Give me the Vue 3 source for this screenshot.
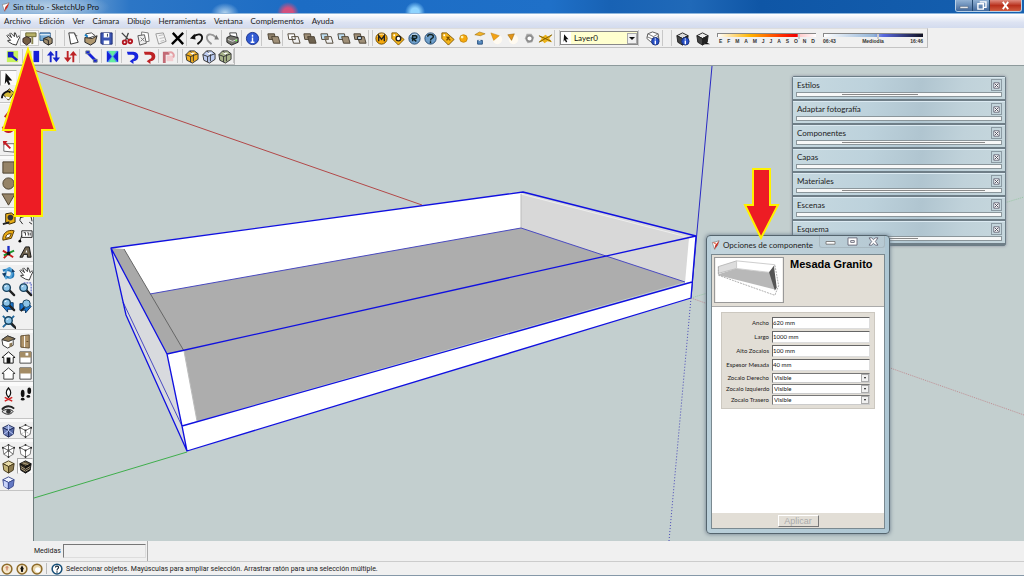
<script setup>
import { reactive, ref } from 'vue'

const sheet = '<path d="M3 2h6l4 10-8 2z" fill="#fff" stroke="#333"/><path d="M9 2l1 3 2 0" fill="none" stroke="#555"/>'
const coin = (c, e, inner) => `<circle cx="8" cy="8" r="6" fill="${c}" stroke="${e}"/><path d="M4 6a5 5 0 0 1 7-2" fill="none" stroke="#fff" opacity=".7"/>${inner}`
const tag = (inner) => `<path d="M2 2h5l8 7-6 6-7-7z" fill="#f5b51b" stroke="#805600"/><circle cx="4.500" cy="4.500" r="1" fill="#fff"/>${inner}`
const cube = (top, l, r, s) => `<path d="M8 2l6 3-6 3-6-3z" fill="${top}" stroke="${s}"/><path d="M2 5l6 3v7l-5-3z" fill="${l}" stroke="${s}"/><path d="M14 5l-6 3v7l5-3z" fill="${r}" stroke="${s}"/>`
const wire = (extra) => cube('#fff', '#fff', '#fff', '#777') + '<g fill="#222"><circle cx="2" cy="5" r="1"/><circle cx="14" cy="5" r="1"/><circle cx="8" cy="8" r="1"/><circle cx="8" cy="15" r="1"/><circle cx="8" cy="2" r="1"/></g>' + extra
const solid = (a, b) => `<path d="M2 3h7l1 6H3z" fill="${a}" stroke="#4d4334"/><path d="M6 6h7l2 7H8z" fill="${b}" stroke="#4d4334"/>`
const lens = (x, y) => `<path d="M${x + 3} ${y + 3}l5 5" stroke="#222" stroke-width="2.500" stroke-linecap="round"/><circle cx="${x}" cy="${y}" r="4" fill="#8cc4e8" stroke="#16405c" stroke-width="1.500"/><path d="M${x - 2} ${y - 1}l2-1" stroke="#fff"/>`
const info = '<circle cx="11" cy="11" r="4" fill="#2850c8" stroke="#16307c"/><path d="M11 8v1M11 10v4" stroke="#fff" stroke-width="1.500"/>'
const handShape = '<path d="M8 14L3 11l0-1 3 0-4-5 1-1 4 3-2-4 1-1 4 4 0-4 1 0 2 5 2-2 1 1-2 4-2 5z" fill="#fff" stroke="#333" stroke-linejoin="round"/>'
const curve = (c) => `<path d="M2 3h7c7 0 7 10 0 10l-1-2c3-1 3-5 0-5H3z" fill="${c}"/><path d="M9 10v6l-4-3z" fill="${c}"/>`
const bag = (c) => `<path d="M2 6l4-4 5 0 4 3v6l-6 4-6-3z" fill="${c}" stroke="#333"/><path d="M2 6l5 2v6M7 8l8-3M6 2l4 4v7" fill="none" stroke="#333"/><path d="M6 4l3 2 3-2" fill="#fff"/>`

const icons = {
  hand: handShape,
  options: '<path d="M4 2h11v4H4z" fill="#b7b067" stroke="#6c6735"/><path d="M11 6v8" stroke="#8a854f" stroke-width="2"/><path d="M1 8l4-2 4 2v4l-4 3-4-3z" fill="#745d43" stroke="#322"/>',
  component: '<path d="M1 2h11v8H1z" fill="#7aaed8" stroke="#2d5d8e"/><path d="M1 4h11" stroke="#fff"/><path d="M5 8l5-2 4 2v5l-4 2-5-3z" fill="#a29071" stroke="#222"/><path d="M5 8l5 2v5" fill="none" stroke="#222"/>',
  newdoc: sheet,
  open: '<path d="M3 3l6-1 4 3-8 3z" fill="#fff" stroke="#444"/><path d="M2 7l8 1 5-3-2 7-5 3-6-3z" fill="#b09870" stroke="#222"/><path d="M2 4l3 2" stroke="#1681c9" stroke-width="2"/>',
  save: '<path d="M2 2h12v12H3l-1-1z" fill="#3b55b4" stroke="#1b2a70"/><path d="M5 2h6v5H5zM5 10h6v4H5z" fill="#fff"/><path d="M9 3v3" stroke="#234"/>',
  cut: '<path d="M3 2l8 8M10 2L7 10" stroke="#444" stroke-width="1.500"/><circle cx="6" cy="12" r="2" fill="none" stroke="#b31822" stroke-width="2"/><circle cx="12" cy="11" r="2" fill="none" stroke="#b31822" stroke-width="2"/>',
  copy: '<path d="M6 1l7 1 1 9-8 1z" fill="#fff" stroke="#777"/><path d="M2 5l7-1 2 9-7 2z" fill="#eee" stroke="#555"/><path d="M5 7l4 4M9 7l-4 4" stroke="#777"/>',
  paste: '<path d="M3 3l8-1 3 9-8 3z" fill="#f4f4f4" stroke="#999"/><path d="M6 5l5-1M7 8l5-1M8 11l4-1" stroke="#bbb"/>',
  remove: '<path d="M3 2l11 12M14 2L2 14" stroke="#000" stroke-width="2.500"/>',
  undo: '<path d="M4 7C9 2 14 3 14 7c0 3-2 5-5 7" fill="none" stroke="#111" stroke-width="2"/><path d="M1 8l5-5 1 6z" fill="#111"/>',
  redo: '<path d="M12 7C7 2 2 3 2 7c0 3 2 5 5 7" fill="none" stroke="#999" stroke-width="2"/><path d="M15 9l-5 0 2-5z" fill="#777"/>',
  print: '<path d="M5 2h7l1 5H6z" fill="#fff" stroke="#444"/><path d="M2 7l4-2 8 2v5l-7 3-5-3z" fill="#77776f" stroke="#222"/><path d="M3 9l5 2 5-2" fill="none" stroke="#ddd"/><circle cx="12" cy="10" r="1" fill="#6e4"/>',
  info: '<circle cx="8" cy="8" r="6.500" fill="#315ad2" stroke="#17318c"/><path d="M8 4v2M8 7v5M6 12h4" stroke="#fff" stroke-width="1.500"/>',
  solid1: solid('#8e816c', '#a09078'), solid2: solid('#fff', 'none'), solid3: solid('#a09078', '#6e6250'),
  solid4: solid('#bfe0f4', 'none') + '<path d="M6 6h4v3H6z" fill="#8e816c"/>', solid5: solid('#bfe0f4', '#a09078'), solid6: solid('#a09078', '#a09078') + '<path d="M6 6h4v3H6z" fill="#cdeaff" stroke="#222"/>',
  coinM: coin('#f7a90b', '#6c4a00', '<path d="M5 11V5l3 4 3-4v6" fill="none" stroke="#222" stroke-width="1.500"/>'),
  coinR: coin('#6e9fcb', '#274d75', '<path d="M6 11V5h3a1.500 1.500 0 0 1 0 3H6l4 3" fill="none" stroke="#122" stroke-width="1.500"/>'),
  coinQ: coin('#6e9fcb', '#274d75', '<path d="M5 6c0-3 6-3 6 0 0 2-3 1-3 4M8 11v2" fill="none" stroke="#122" stroke-width="1.500"/>'),
  tagO: tag('<circle cx="9" cy="8" r="2.500" fill="#fff" stroke="#222" stroke-width="1.500"/>'),
  tagF: tag('<path d="M7 10l3-4M7 6l4 4" stroke="#744c00" stroke-width="1.500"/>'),
  ball: '<circle cx="8" cy="8" r="4" fill="#f6a90c" stroke="#c58a14"/><circle cx="6.500" cy="6.500" r="1.500" fill="#fff3b0"/>',
  lamp: '<path d="M3 4l5-3 6 2-5 2z" fill="#f3b326" stroke="#8a5c00" stroke-width=".5"/><path d="M6 10h5v4H6z" fill="#5b8ec1" stroke="#234e7e"/><path d="M7 10l2 0" stroke="#fff"/>',
  spotA: '<circle cx="9" cy="9" r="5" fill="#fffaf0"/><path d="M2 2l9 3-6 5z" fill="#f3a216" stroke="#b97b0b" stroke-width=".5"/>',
  spotB: '<circle cx="9" cy="9" r="5" fill="#fffaf0"/><path d="M3 4l7-1-3 7z" fill="#e2951a" stroke="#8a5c00" stroke-width=".5"/>',
  ring: '<path d="M5 3l5 0 3 4-2 5-5 1-3-5z" fill="#aaa"/><circle cx="8" cy="8" r="3" fill="#fff" stroke="#888" stroke-width="1.500"/>',
  flare: '<path d="M1 5l4 1 3-2 3 2 4-2-3 4 3 4-5-1-3 2-2-2-4 1 3-4z" fill="#edb31a"/><path d="M1 5l13 6M1 12L15 4" stroke="#7b5b00"/>',
  layer: '<path d="M3 3l5-2 6 2 1 7-6 4-7-6z" fill="#fff" stroke="#555"/><path d="M2 6l7 3 6-4M3 3l6 3 5-3M9 6v8" fill="none" stroke="#777"/>' + info,
  boxInfo: cube('#ddd', '#444', '#222', '#222') + info,
  box: cube('#eee', '#444', '#222', '#222') + '<path d="M12 12l4 2h-6z" fill="#111"/>',
  scaleBox: '<path d="M2 2h12v12H2z" fill="#c6f35c"/><path d="M3 3h6v6H3z" fill="#1118c8"/><path d="M7 7l6 5" stroke="#1118c8" stroke-width="2.500"/>',
  bar: '<path d="M8 2h6v12H8z" fill="#1520d8"/><path d="M2 2h4v12H2z" fill="#d9f07e"/>',
  arrowsBlue: '<path d="M5 14V5M11 2v9" stroke="#1725cc" stroke-width="2"/><path d="M1 7l4-5 4 5zM7 9h8l-4 5z" fill="#1725cc"/>',
  arrowsRed: '<path d="M5 2v9M11 14V5" stroke="#bd2326" stroke-width="2"/><path d="M1 9h8l-4 5zM7 7l4-5 4 5z" fill="#bd2326"/>',
  link: '<path d="M4 4l8 8" stroke="#1520d8" stroke-width="3"/><path d="M2 2h4v3H2zM10 11h4v3h-4z" fill="#1520d8" stroke="#678"/>',
  bow: '<path d="M2 2h12v12H2z" fill="#4c8cf0"/><path d="M2 2l5 6-5 6zM14 2L9 8l5 6z" fill="#1520d8"/><path d="M4 2h8L8 8zM4 14h8L8 8z" fill="#63ec9d"/>',
  curveBlue: curve('#1725dd'), curveRed: curve('#bd2326'),
  faded: '<path d="M2 3h7v3H5v9H2z" fill="#c36a75"/><path d="M6 7h7v6H6z" fill="#f3cccf"/><path d="M8 4c4-2 7 2 5 5" fill="none" stroke="#e4a0a5" stroke-width="2"/>',
  bagGold: bag('#efae22'), bagBlue: bag('#bdcdf3'), bagGreen: bag('#a7b388'),
  select: '<path d="M5 2l7 8-4 0 2 4-2 1-2-4-2 3z" fill="#111"/>',
  paint: '<path d="M2 8l7-6 5 4-6 8z" fill="#d3ba36" stroke="#222"/><path d="M1 12c0-6 7-9 9-6" fill="none" stroke="#111" stroke-width="2"/><path d="M5 11l4 1" stroke="#fff" stroke-width="2"/>',
  pencil: '<path d="M4 13l7-9" stroke="#bd2326" stroke-width="2"/>',
  arc: '<path d="M2 5c2 7 9 7 12 1" fill="none" stroke="#c41d24" stroke-width="2.500"/>',
  resize: '<path d="M3 5h11v9l-11-1z" fill="#fff" stroke="#666"/><path d="M3 3l7 7" stroke="#c41d24" stroke-width="2"/><path d="M2 2h5L3 7z" fill="#c41d24"/>',
  rect: '<path d="M2 2h12v12H2z" fill="#958367" stroke="#4a3f2d"/>',
  circle: '<circle cx="8" cy="8" r="6" fill="#958367" stroke="#4a3f2d"/>',
  poly: '<path d="M1 2h14L8 14z" fill="#958367" stroke="#4a3f2d"/>',
  tape: '<path d="M5 3l6-1 4 3v7l-6 2-4-2z" fill="#e9ae16" stroke="#332500"/><circle cx="10" cy="7" r="3" fill="#333"/><path d="M9 12l-7 2" stroke="#222" stroke-width="2"/>',
  dim: '<path d="M3 7l10-3M3 5l-1 5M13 2l2 9M2 10l3 4M12 12l3 2" fill="none" stroke="#222"/>',
  protractor: '<path d="M2 13C1 6 7 1 14 3l-3 8z" fill="#e9a912" stroke="#523600"/><path d="M5 11c0-4 3-5 6-5l-2 4z" fill="#fff" stroke="#523600"/>',
  label: '<path d="M4 3h11v7H4zM4 8l-2 6" fill="#fff" stroke="#222"/><path d="M6 5h2v3M10 5h1v3M13 5v3" stroke="#333" fill="none"/><circle cx="2" cy="14" r="1.500"/>',
  axes: '<path d="M8 1v8" stroke="#1b2cc4" stroke-width="2.500"/><path d="M8 9l-5 5M2 6l11 7" stroke="#c81d1d" stroke-width="2"/><path d="M3 11l11-5" stroke="#18962c" stroke-width="2"/><circle cx="8" cy="9" r="2" fill="#111"/>',
  text3d: '<path d="M2 13L8 2h4l2 11h-4v-3H6l-1 3z" fill="#70644e" stroke="#111"/><path d="M8 8l1-3 1 3z" fill="#fff"/>',
  orbit: '<path d="M2 5c5-2 11 0 11 4s-5 4-9 2" fill="none" stroke="#2478b7" stroke-width="2.500"/><path d="M6 14c-3-4-1-11 3-12 3 1 4 8 0 11" fill="none" stroke="#56a5d9" stroke-width="2"/><path d="M1 8l5-1-2 5zM12 3l3 3-4 1z" fill="#123e68"/>',
  pan: handShape,
  zoom: lens(6, 6),
  zoomWin: '<path d="M6 1h8v13" fill="none" stroke="#3549bf" stroke-dasharray="2 1"/>' + lens(6, 6),
  prev: '<path d="M1 8l6-6v3h6v7H7v3z" fill="#1c77d1" stroke="#0c3762"/>' + lens(6, 5),
  next: '<path d="M14 9L8 3v3H2v7h6v3z" fill="#1c77d1" stroke="#0c3762"/><path d="M7 10l-4 4" stroke="#222" stroke-width="2"/><circle cx="9" cy="6" r="4" fill="#8cc4e8" stroke="#16405c"/>',
  extents: '<path d="M2 2l12 12M14 2L2 14" stroke="#22689c" stroke-width="2"/>' + lens(8, 7),
  iso: '<path d="M1 6l6-4 8 3-2 2v5l-6 3-5-3z" fill="#fff" stroke="#333"/><path d="M1 6l7 2 7-3-8-3z" fill="#8d7956" stroke="#333"/><path d="M9 10l3-1v4l-3 1z" fill="#8d7956"/>',
  door: '<path d="M3 2l9-1v14l-9-1z" fill="#ae9268" stroke="#5f4b2d"/><path d="M7 2v12" stroke="#fff"/><path d="M9 8h2" stroke="#5f4b2d"/>',
  house: '<path d="M1 8l7-6 7 6-2 0v6H3V8z" fill="#fff" stroke="#111"/><path d="M6 8h4v6H6z" fill="#111"/>',
  houseBack: '<path d="M1 8l7-6 7 6-2 0v6H3V8z" fill="#fff" stroke="#333"/>',
  sideA: '<path d="M2 2h12v12H2z" fill="#fff" stroke="#444"/><path d="M2 2h12v6H2z" fill="#a48c65"/><path d="M8 3h3v3H8z" fill="#fff"/>',
  sideB: '<path d="M2 2h12v12H2z" fill="#fff" stroke="#444"/><path d="M2 2h12v6H2z" fill="#a48c65"/>',
  person: '<path d="M8 1c-3 3-3 7 0 10 3-3 3-7 0-10z" fill="#fff" stroke="#111" stroke-width="1.500"/><path d="M4 11l8 4M12 11l-8 4" stroke="#d02020" stroke-width="1.500"/>',
  feet: '<g fill="#111"><ellipse cx="5" cy="7" rx="2" ry="4"/><ellipse cx="5" cy="13" rx="2" ry="1.500"/><ellipse cx="12" cy="4" rx="2" ry="3.500"/><ellipse cx="11" cy="10" rx="2" ry="1.500"/></g>',
  eye: '<path d="M1 7c4-5 10-4 13-1" fill="none" stroke="#222" stroke-width="2"/><path d="M1 9c4-3 9-3 12 0-3 4-8 4-12 0z" fill="#ddd" stroke="#222"/><circle cx="8" cy="9" r="2.500" fill="#333"/>',
  xray: cube('#8ea1d4', '#6c7db8', '#566aa8', '#222d5c') + '<path d="M3 12l5-4 5 4M8 2v6" fill="none" stroke="#c8d3ff"/>',
  backEdges: wire('<path d="M3 12l5-3 5 3" fill="none" stroke="#999" stroke-dasharray="1 1"/>'),
  wireframe: wire('<path d="M3 12l5-4 5 4M8 2v6" fill="none" stroke="#555"/>'),
  hidden: wire(''),
  shaded: cube('#e8dcaa', '#c5b579', '#8b7a4f', '#45391b'),
  textured: cube('#60553b', '#332c20', '#15120e', '#111') + '<path d="M3 8l5 3 5-3M3 10l5 3 5-3M5 4l6 2" fill="none" stroke="#b8a98a"/>',
  mono: cube('#edf2ff', '#8294dc', '#6479c4', '#3c4c8e') + '<path d="M3 6l4 2v6l-4-2z" fill="#c9d4fa"/>'
}

const seg = (w, names, after = 2, grip = false) => ({ w, names: names.split(' '), after, grip })
const rowOne = [
  seg(51, 'hand options component', 10, true),
  seg(50, 'newdoc open save', 3),
  seg(68, 'cut copy paste remove', 2),
  seg(33, 'undo redo', 2),
  seg(18, 'print', 2),
  seg(18, 'info', 4),
  seg(17, 'solid1', 3),
  seg(83, 'solid2 solid3 solid4 solid5 solid6', 5, true),
  seg(181, 'coinM tagO coinR coinQ tagF ball lamp spotA spotB ring flare', 6, true)
]
const rowTwo = [
  seg(20, 'scaleBox'), seg(18, 'bar', 3), seg(34, 'arrowsBlue arrowsRed'), seg(20, 'link'),
  seg(18, 'bow', 3), seg(34, 'curveBlue curveRed'), seg(17, 'faded', 6, true), seg(50, 'bagGold bagBlue bagGreen', 1)
]
const side = [
  { h: 32, after: 2, names: ['select', '', 'paint', ''] },
  { h: 51, after: 4, names: ['pencil', '', 'arc', '', 'resize', ''] },
  { h: 48, after: 3, names: ['rect', '', 'circle', '', 'poly', ''] },
  { h: 51, after: 4, names: ['tape', 'dim', 'protractor', 'label', 'axes', 'text3d'] },
  { h: 64, after: 4, names: ['orbit', 'pan', 'zoom', 'zoomWin', 'prev', 'next', 'extents', ''] },
  { h: 48, after: 5, names: ['iso', 'door', 'house', 'sideA', 'houseBack', 'sideB'] },
  { h: 32, after: 4, names: ['person', 'feet', 'eye', ''] },
  { h: 16, after: 4, names: ['xray', 'backEdges'] },
  { h: 48, after: 1, names: ['wireframe', 'hidden', 'shaded', 'textured', 'mono', ''] }
]
const menus = ['Archivo', 'Edición', 'Ver', 'Cámara', 'Dibujo', 'Herramientas', 'Ventana', 'Complementos', 'Ayuda']
const months = ['E', 'F', 'M', 'A', 'M', 'J', 'J', 'A', 'S', 'O', 'N', 'D']
const trays = [
  { name: 'Estilos', tabs: 48 }, { name: 'Adaptar fotografía', tabs: 0 }, { name: 'Componentes', tabs: 90 },
  { name: 'Capas', tabs: 0 }, { name: 'Materiales', tabs: 90 }, { name: 'Escenas', tabs: 0 }, { name: 'Esquema', tabs: 48 }
]
const fields = reactive([
  { id: 'ancho', label: 'Ancho', value: '620 mm' },
  { id: 'largo', label: 'Largo', value: '1000 mm' },
  { id: 'alto', label: 'Alto Zocalos', value: '100 mm' },
  { id: 'espesor', label: 'Espesor Mesada', value: '40 mm' }
])
const choices = reactive([
  { id: 'derecho', label: 'Zocalo Derecho', value: 'Visible' },
  { id: 'izquierdo', label: 'Zocalo Izquierdo', value: 'Visible' },
  { id: 'trasero', label: 'Zocalo Trasero', value: 'Visible' }
])
const layer = ref('Layer0')
const measure = ref('')
</script>

<template>
  <div class="app">
    <header class="titlebar">
      <svg class="logo" viewBox="0 0 16 16"><path d="M2 4l5-1 6-2-2 6-5 8-2-5z" fill="#fff" stroke="#777" /><path d="M13 1l-3 8-5 6 2-7z" fill="#c52a1d" /></svg>
      <span class="caption">Sin título - SketchUp Pro</span>
      <div class="winbuttons">
        <button aria-label="Minimizar"><svg viewBox="0 0 14 10"><path d="M2 6h9v2H2z" fill="#fff" stroke="#456" stroke-width=".5" /></svg></button>
        <button aria-label="Restaurar"><svg viewBox="0 0 14 10"><path d="M5 1h7v6H9M3 3h6v6H3z" fill="none" stroke="#fff" stroke-width="1.500" /></svg></button>
        <button class="close" aria-label="Cerrar"><svg viewBox="0 0 14 10"><path d="M4 1l6 8M10 1L4 9" stroke="#fff" stroke-width="2" /></svg></button>
      </div>
    </header>

    <nav class="menubar"><a v-for="m in menus" :key="m" href="#">{{ m }}</a></nav>

    <div class="toolbars">
      <div class="row first">
        <template v-for="(s, i) in rowOne" :key="i">
          <div class="seg" :style="{ width: s.w + 'px' }">
            <button v-for="n in s.names" :key="n" :aria-label="n" :class="{ on: n === 'options' }"><svg viewBox="0 0 16 16" v-html="icons[n]"></svg></button>
          </div>
          <i class="div" :class="{ grip: s.grip }" :style="{ width: s.after + 'px' }"></i>
        </template>
        <div class="layerbox">
          <svg viewBox="0 0 16 16" v-html="icons.select"></svg>
          <select v-model="layer" aria-label="Capa"><option>Layer0</option></select>
          <i class="drop"></i>
        </div>
        <i class="div layergap"></i>
        <div class="seg single"><button aria-label="Capas"><svg viewBox="0 0 16 16" v-html="icons.layer"></svg></button></div>
        <i class="div grip wide"></i>
        <div class="seg double">
          <button aria-label="Sombras"><svg viewBox="0 0 16 16" v-html="icons.boxInfo"></svg></button>
          <button aria-label="Mostrar sombras"><svg viewBox="0 0 16 16" v-html="icons.box"></svg></button>
        </div>
        <div class="scale">
          <div class="ramp warm"><i></i></div>
          <div class="ticks"><span v-for="(m, i) in months" :key="i">{{ m }}</span></div>
        </div>
        <div class="scale hours">
          <div class="ramp cool"><i></i></div>
          <div class="ticks"><span>06:43</span><span>Mediodía</span><span>16:46</span></div>
        </div>
      </div>
      <div class="row second">
        <template v-for="(s, i) in rowTwo" :key="i">
          <div class="seg" :style="{ width: s.w + 'px' }">
            <button v-for="n in s.names" :key="n" :aria-label="n"><svg viewBox="0 0 16 16" v-html="icons[n]"></svg></button>
          </div>
          <i class="div" :class="{ grip: s.grip }" :style="{ width: s.after + 'px' }"></i>
        </template>
      </div>
    </div>

    <main class="work">
      <aside class="side">
        <template v-for="(s, i) in side" :key="i">
          <div class="pair" :style="{ height: s.h + 'px' }">
            <template v-for="(n, k) in s.names" :key="k">
              <button v-if="n" :aria-label="n" :class="{ sunk: n === 'textured' || n === 'select' }"><svg viewBox="0 0 16 16" v-html="icons[n]"></svg></button>
              <i v-else></i>
            </template>
          </div>
          <i class="rule" :style="{ height: s.after + 'px' }"></i>
        </template>
      </aside>

      <section class="canvas">
        <svg class="scene" viewBox="34 66 990 475" preserveAspectRatio="xMinYMin slice">
          <g fill="none">
            <path d="M34 70L422 205" stroke="#b24848" />
            <path d="M34 498L187 452" stroke="#3fae4c" />
            <path d="M712 66L691 298" stroke="#2a2ac4" />
            <path d="M691 298L669 541" stroke="#4848b8" stroke-dasharray="1 2" />
            <path d="M691 298L1024 415" stroke="#c08f94" stroke-dasharray="1 1" />
            <path d="M691 298L1024 197" stroke="#98c8a4" stroke-dasharray="1 1" />
          </g>
          <path d="M111 248L167 354 187 451 126 315z" fill="#d8dade" />
          <path d="M111 248L523 192 521 228 150 294z" fill="#fff" />
          <path d="M521 193L696 236 685 283 521 228z" fill="#d8d8d8" />
          <path d="M150 294L521 228 685 282 197 421 184 351z" fill="#adadad" />
          <path d="M111 248L124 249 184 351 167 354z" fill="#a9a9a9" />
          <path d="M167 354L184 351 197 421 182 426z" fill="#fff" />
          <path d="M689 238L696 236 692 282 685 283z" fill="#fff" />
          <path d="M182 426L692 282 691 298 187 451z" fill="#fff" />
          <path d="M521 194L687 237" stroke="#eee" fill="none" />
          <path d="M124 249L184 351" stroke="#666" fill="none" />
          <path d="M184 351L197 421M521 194v34" stroke="#bbb" fill="none" />
          <path d="M150 294L521 228 685 282M123 302L182 426" stroke="#4a4ac0" fill="none" />
          <path d="M111 248L523 192 696 236 167 354zM111 248L126 315 187 451 691 298 696 236M167 354L182 426 187 451M182 426L692 282" fill="none" stroke="#1010e0" stroke-width="1.300" stroke-linejoin="round" />
        </svg>

        <div class="trays">
          <div v-for="t in trays" :key="t.name" class="tray">
            <div class="trayhead"><span>{{ t.name }}</span><button :aria-label="'Cerrar ' + t.name"><svg viewBox="0 0 10 10"><path d="M2 2h6v6H2z" fill="#fff" stroke="#667" /><path d="M3 3l4 4M7 3L3 7" fill="none" stroke="#445" /></svg></button></div>
            <div class="strip"><i v-if="t.tabs" :style="{ width: t.tabs + '%' }"></i></div>
          </div>
        </div>

        <section class="dialog">
          <div class="dialoghead">
            <svg class="logo" viewBox="0 0 16 16"><path d="M2 4l5-1 6-2-2 6-5 8-2-5z" fill="#fff" stroke="#777" /><path d="M13 1l-3 8-5 6 2-7z" fill="#c52a1d" /><path d="M2 4l5 0 1 3z" fill="#e25b3c" /></svg>
            <span>Opciones de componente</span>
            <div class="dlgbuttons">
              <button aria-label="Minimizar"><svg viewBox="0 0 12 10"><path d="M1 5h10v3H1z" fill="#fff" stroke="#777" /></svg></button>
              <button aria-label="Maximizar"><svg viewBox="0 0 12 10"><path d="M1 1h10v8H1zM4 4h4v2H4z" fill="#fff" stroke="#667" /></svg></button>
              <button aria-label="Cerrar"><svg viewBox="0 0 12 10"><path d="M1 1h3l2 2 2-2h3L8 5l3 4H8L6 7 4 9H1l3-4z" fill="#fff" stroke="#667" /></svg></button>
            </div>
          </div>
          <div class="body">
            <div class="summary">
              <svg class="thumb" viewBox="0 0 70 46">
                <path d="M0 0h70v46H0z" fill="#fff" />
                <path d="M3 17L22 11 57 15 62 33 3 18z" fill="#b8b8b8" />
                <path d="M3 9L22 3 22 11 3 16z" fill="#ddd" stroke="#bbb" />
                <path d="M22 3L62 7 61 10 56 15 22 11z" fill="#fff" stroke="#ccc" />
                <path d="M61 8L64 31 62 34 56 15z" fill="#555" />
                <path d="M3 9v9L62 39 66 29 62 7" fill="none" stroke="#aaa" stroke-dasharray="2 1" />
              </svg>
              <h1>Mesada Granito</h1>
            </div>
            <form class="form" @submit.prevent>
              <div v-for="f in fields" :key="f.id" class="line tall">
                <label :for="f.id">{{ f.label }}</label><input :id="f.id" v-model="f.value" type="text" />
              </div>
              <div v-for="c in choices" :key="c.id" class="line">
                <label :for="c.id">{{ c.label }}</label>
                <div class="pick"><select :id="c.id" v-model="c.value"><option>Visible</option></select><i class="drop"></i></div>
              </div>
            </form>
            <footer><button disabled>Aplicar</button></footer>
          </div>
        </section>

        <svg class="pointer small" viewBox="0 0 38 76"><path d="M11 3h17v36h8L19 72 3 39h8z" fill="#ed1c24" stroke="#fff200" stroke-width="2" /></svg>
      </section>
    </main>

    <div class="measure"><label for="med">Medidas</label><input id="med" v-model="measure" type="text" /></div>
    <footer class="status">
      <svg viewBox="0 0 16 16"><circle cx="8" cy="8" r="6.500" fill="#f5e7c9" stroke="#8e6b2a" stroke-width="2" /><path d="M8 4v6M6 6h4" stroke="#d59175" stroke-width="2" /></svg>
      <svg viewBox="0 0 16 16"><circle cx="8" cy="8" r="6.500" fill="#f5e7c9" stroke="#8e6b2a" stroke-width="2" /><path d="M8 3l2 4-1 5H7L6 7z" fill="#111" /></svg>
      <svg viewBox="0 0 16 16"><circle cx="8" cy="8" r="6.500" fill="#e9d7ab" stroke="#8e6b2a" stroke-width="2" /><circle cx="9" cy="9" r="3.500" fill="#fff" /></svg>
      <i></i>
      <svg viewBox="0 0 16 16"><circle cx="8" cy="8" r="6.500" fill="#fff" stroke="#174f78" stroke-width="2" /><path d="M6 6c0-3 5-2 4 0 0 2-2 1-2 4M8 11v2" fill="none" stroke="#123" stroke-width="1.500" /></svg>
      <span>Seleccionar objetos. Mayúsculas para ampliar selección. Arrastrar ratón para una selección múltiple.</span>
    </footer>

    <svg class="pointer big" viewBox="0 0 58 174"><path d="M28 5L55 86H42V172H15V86H3z" fill="#ed1c24" stroke="#fff200" stroke-width="2" /></svg>
  </div>
</template>

<style>
body { margin: 0; }
</style>

<style scoped>
.app { position: relative; display: flex; flex-direction: column; min-height: 100vh; background: #f0f0f0; font-family: Lato, "Open Sans", sans-serif; font-size: 8px; line-height: 12px; color: #222; overflow: hidden; }
* { box-sizing: border-box; }
button { padding: 0; border: 0; background: none; font: inherit; color: inherit; display: flex; align-items: center; justify-content: center; }
input, select { font: inherit; color: #111; margin: 0; padding: 0; border-radius: 0; min-width: 0; }
select { appearance: none; border: 0; }
a { color: inherit; text-decoration: none; }

.titlebar { height: 14px; display: flex; align-items: center; gap: 2px; padding-left: 1px; border-bottom: 1px solid #8fb6dc;
  background: radial-gradient(ellipse 60px 14px at 50px 7px, #b6cfe6, transparent),
    radial-gradient(circle at 288px 13px, #d2507e 0 5px, transparent 11px),
    radial-gradient(circle at 415px 12px, #8fd4ff 0 4px, transparent 10px),
    radial-gradient(ellipse 14px 10px at 225px 13px, #b3d3ee, transparent),
    linear-gradient(90deg, #8db2d8 0, #5c95cf 90px, #2c76c6 130px, #1c6cc4 300px, #1f70c8 550px, #1862b4 610px, #2069b8 690px, #0f56a6 760px, #1560b0 100%); }
.logo { width: 10px; height: 10px; flex: none; }
.caption { flex: 1; color: #111; }
.winbuttons { display: flex; align-self: flex-start; height: 12px; margin-right: 2px; border: 1px solid #b8d0e6; border-top: 0; border-radius: 0 0 3px 3px; overflow: hidden; }
.winbuttons button { width: 17px; background: linear-gradient(#92b2d4, #42699c); border-right: 1px solid #24486e; }
.winbuttons .close { width: 31px; border: 0; background: linear-gradient(#e08c80, #b8301c 50%, #d05c40); }
.winbuttons svg { width: 13px; height: 9px; }

.menubar { height: 14px; display: flex; align-items: center; gap: 8px; padding-left: 4px; background: linear-gradient(#fff, #dde3f2 60%, #d3dbee); }
.toolbars { height: 38px; border-bottom: 1px solid #8d9a9c; background: #f0f0f0; }
.row { display: flex; align-items: stretch; width: max-content; border-right: 1px solid #bbb; border-bottom: 1px solid #c4c4c4; }
.first { height: 20px; padding-left: 4px; padding-right: 4px; border-top: 1px solid #ddd; }
.second { height: 17px; padding-left: 2px; }
.seg { display: flex; align-items: center; }
.seg button { flex: 1; height: 16px; min-width: 0; }
.seg svg, .pair svg { width: 15px; height: 15px; flex: none; }
.seg .on { background: #fafafa; border: 1px solid #ccc; }
.single { width: 20px; }
.double { width: 40px; }
.div { flex: none; border-left: 1px solid #c8c8c8; margin: 1px 0; }
.grip { border-right: 1px solid #c8c8c8; }
.wide { width: 10px; }
.layergap { width: 4px; }
.layerbox { display: flex; align-items: center; width: 78px; height: 14px; align-self: center; background: #ffffcf; border: 1px solid #888; }
.layerbox svg { width: 10px; height: 12px; background: #fff; flex: none; }
.layerbox select { flex: 1; height: 12px; padding-left: 3px; background: #ffffcf; }
.drop { display: flex; align-items: center; justify-content: center; width: 10px; height: 11px; flex: none; background: #f0f0f0; border: 1px solid #aaa; pointer-events: none; }
.drop::after { content: ""; border: 3px solid transparent; border-top: 3px solid #111; border-bottom: 0; }
.scale { width: 99px; margin: 4px 0 0 5px; }
.hours { width: 100px; margin-left: 7px; }
.ramp { height: 4px; display: flex; border-top: 1px solid #888; border-left: 1px solid #888; }
.ramp i { width: 2px; height: 5px; background: #fff; border: 1px solid #ccc; }
.warm { background: linear-gradient(90deg, #fff, #ffb400 33%, #ff2a00 66%, #e00 80%, #fcc 84%, #fff); }
.warm i { margin-left: 82%; }
.cool { background: linear-gradient(90deg, #fff, #93b4d8 50%, #5868e0 60%, #101020); }
.cool i { margin-left: 54%; }
.ticks { display: flex; justify-content: space-between; font: bold 5px/8px "Liberation Sans", sans-serif; padding: 0 1px 0 2px; color: #333; }
.hours .ticks { padding: 0; }

.work { flex: 1; display: flex; min-height: 475px; }
.side { width: 34px; flex: none; padding-top: 4px; background: #f0f0f0; border-right: 1px solid #6d7a7c; }
.pair { display: grid; grid-template-columns: 17px 16px; grid-auto-rows: 1fr; }
.pair button { min-height: 0; }
.pair .sunk { background: #fbfbfb; border: 1px solid; border-color: #aaa #eee #eee #aaa; }
.rule { display: block; border-top: 1px solid #c4c4c4; background: #fafafa; }
.canvas { position: relative; flex: 1; background: #c3cfcf; min-width: 0; overflow: hidden; }
.scene { position: absolute; inset: 0; width: 100%; height: 100%; }

.trays { position: absolute; top: 10px; right: 18px; width: 214px; border: 1px solid #6c7d86; border-radius: 2px; box-shadow: 0 0 3px #889; }
.tray { height: 24px; padding: 1px 3px 0; border-bottom: 2px solid #6f7e87; background: linear-gradient(100deg, #c7d9e0, #bdd2dc 35%, #b0c5d0 60%, #c0d2da 80%, #c6d7dd); border-top: 1px solid #dceaf2; }
.trayhead { display: flex; justify-content: space-between; align-items: center; height: 12px; padding-left: 1px; }
.trayhead button { width: 11px; height: 12px; border: 1px solid #8b9aa3; }
.trayhead svg { width: 9px; height: 9px; }
.strip { height: 5px; margin-top: 1px; padding: 1px 0 0 45px; background: #f7f8f8; border: 1px solid #8b969b; }
.strip i { display: block; height: 1px; background: #888; }

.dialog { position: absolute; top: 169px; left: 672px; width: 184px; padding: 0 4px 4px; border: 1px solid #55656e; border-radius: 4px; background: linear-gradient(90deg, #b9cfd9, #adc6d3); box-shadow: 0 0 4px #678; }
.dialoghead { display: flex; align-items: center; gap: 2px; height: 18px; white-space: nowrap; background: linear-gradient(90deg, #c3d5dd, #b6c9d3); }
.dlgbuttons { flex: 1; display: flex; justify-content: space-around; align-self: flex-start; height: 12px; margin-left: 4px; border: 1px solid #a8b8c0; border-top: 0; border-radius: 0 0 3px 3px; }
.dlgbuttons svg { width: 11px; height: 9px; }
.body { display: flex; flex-direction: column; height: 275px; background: #fff; border: 1px solid #7a8990; }
.summary { display: flex; gap: 6px; padding: 2px; height: 52px; background: #e2ded6; border-bottom: 1px solid #aaa; }
.thumb { width: 70px; height: 46px; border: 1px solid #999; flex: none; }
h1 { margin: 0; font: bold 11px/15px "Liberation Sans", sans-serif; color: #000; white-space: nowrap; }
.form { margin: 5px 9px 0; padding: 3px 4px; background: #e2ded6; border: 1px solid #ccc8c0; font-size: 6px; line-height: 10px; }
.line { display: grid; grid-template-columns: 43px 1fr; column-gap: 3px; height: 11px; align-items: center; }
.tall { height: 14px; }
.line label { text-align: right; white-space: nowrap; }
.line input { height: 12px; padding-bottom: 1px; border: 1px solid; border-color: #666 #ddd #ddd #666; background: #fff; }
.pick { display: flex; height: 10px; border: 1px solid; border-color: #777 #ccc #ccc #777; background: #fff; }
.pick select { flex: 1; padding-left: 1px; height: 8px; line-height: 8px; background: #fff; }
.pick .drop { width: 8px; height: 8px; }
.pick .drop::after { border-width: 2px 1px 0; }
.body footer { margin-top: auto; height: 15px; display: flex; justify-content: center; align-items: center; background: #e2ded6; }
.body footer button { width: 41px; height: 12px; border: 1px solid; border-color: #fff #777 #777 #fff; color: #aaa; font: 9px/10px "Liberation Sans", sans-serif; }

.measure { display: flex; align-items: center; height: 20px; width: 148px; padding-left: 34px; gap: 2px; border-right: 1px solid #aaa; }
.measure label, .status { font-family: Roboto, sans-serif; font-size: 7px; }
.measure input { width: 83px; height: 14px; border: 1px solid; border-color: #777 #ddd #ddd #777; background: #f0f0f0; }
.status { display: flex; align-items: center; height: 15px; padding-left: 1px; gap: 3px; border-top: 1px solid #ccc; border-bottom: 1px solid #8598a8; }
.status svg { width: 12px; height: 12px; }
.status i { width: 1px; height: 11px; margin-right: 1px; background: #bbb; }

.pointer { position: absolute; pointer-events: none; }
.big { left: 0; top: 44px; width: 58px; height: 174px; }
.small { left: 708px; top: 100px; width: 38px; height: 76px; }
</style>
